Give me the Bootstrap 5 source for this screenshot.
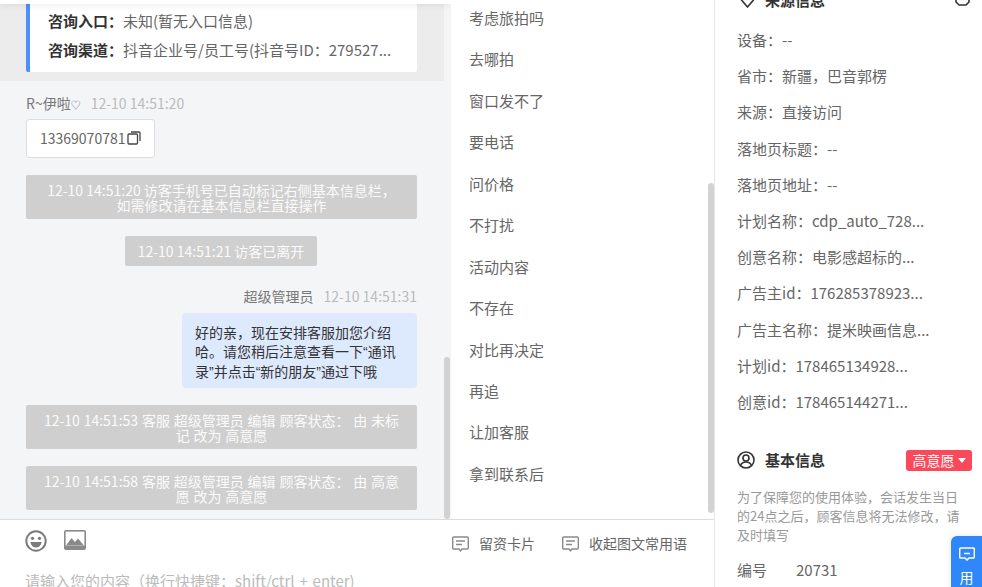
<!doctype html>
<html lang="zh"><head><meta charset="utf-8"><title>会话</title>
<link href="https://cdn.jsdelivr.net/npm/bootstrap@5.3.0/dist/css/bootstrap.min.css" rel="stylesheet">
<style>
html,body{height:587px;overflow:hidden;background:#fff}
body{font-family:"Noto Sans CJK SC","Noto Sans",sans-serif;font-size:15px;color:#666}
.co{font-family:"Noto Sans CJK TC","Noto Sans CJK SC",sans-serif}
.qt{font-family:"Liberation Sans",sans-serif}
.shell{width:982px;height:587px}
.lefty{width:714px;flex:none}
.toprow{height:520px;flex:none;border-bottom:1px solid #dcdcdc}
.chat{width:451px;flex:none;background:#f4f5f7;position:relative}
.chat-strip{height:4px;background:#fff;box-shadow:0 1px 6px rgba(0,0,0,.1);position:relative;z-index:1}
.banner{width:444px;height:77px;background:#ececec;padding:0 27px 0 26px}
.bannercard{height:68px;background:#fff;border-left:4px solid #4d8ffb;padding:2.500px 18px 0;border-radius:0 0 2px 2px}
.bannerline{height:29.500px;line-height:27px;white-space:nowrap}
.bannerline b{color:#333;font-weight:700}
.meta{font-size:14px;line-height:18px;color:#777}
.meta span{color:#bbb;margin-left:10px}
.metal{margin:13px 0 0 26px}
.metar{margin:21px 34px 0 0;text-align:right}
.hrt{font-size:10px}
.phone{width:129px;height:39px;margin:5px 0 0 26px;background:#fff;border:1px solid #ddd;border-radius:3px;padding-left:13px;line-height:37px;font-size:14px}
.phone svg{margin-left:2px;vertical-align:-1px}
.sysmsg{background:#cfcfcf;color:#fbfbfb;font-size:14px;line-height:14.500px;text-align:center;border-radius:2px}
.sysa{margin:17px 34px 0 26px;padding:8px 16px 0;height:44px}
.sysb{margin:17px 0 0 125px;width:192px;height:30px;line-height:30px}
.syschange{margin:17px 34px 0 26px;padding:8px 14px 0;height:44px;word-spacing:.7px}
.mine{width:235px;height:75px;margin:8px 34px 0 auto;background:#dde9fd;border-radius:4px;padding:9.500px 13px 0;line-height:19px;color:#333;font-size:14px;white-space:nowrap}
.chatbar{position:absolute;right:1px;top:357px;width:6px;height:162px;background:#d2d2d2;border-radius:3px}
.mid{width:263px;flex:none;position:relative;background:#fff;padding-left:18px}
.mid div.item{height:41.450px;line-height:35px}
.midbar{position:absolute;right:0;top:183px;width:6px;height:330px;background:#d2d2d2;border-radius:3px}
.composer{height:67px;background:#fff;position:relative}
.tools{padding:10px 0 0 25px;gap:17px}
.linkbtns{position:absolute;right:27px;top:13px;gap:27px;font-size:14px}
.linkbtns>span{gap:10px}
.inputhint{padding:18px 0 0 25px;color:#bbb;white-space:nowrap;word-spacing:1.500px}
.right{width:268px;flex:none;border-left:1px solid #e6e6e6;padding:0 0 0 22px;position:relative}
.srchead{margin-top:-8px;height:16px;color:#333;font-weight:700;line-height:16px}
.srchead .pin{margin:0 10px 0 3px}
.srchead .cap{margin:0 12px 0 auto}
.kv{height:36.200px;line-height:36px;white-space:nowrap}
.kvfirst{margin-top:14px}
.basehead{margin-top:28px;color:#333;font-weight:700;height:24px;line-height:24px;gap:10px}
.hi{background:#f9495a;color:#fff;font-weight:400;border-radius:3px;width:66px;height:21px;line-height:21px;margin-left:auto;margin-right:10px;font-size:14px;gap:3px}
.tri{width:0;height:0;border:4px solid transparent;border-top:5px solid #fff;border-bottom:0}
.tip{margin-top:15px;width:232px;font-size:13px;line-height:19px;color:#999}
.code{margin-top:15px}
.code span{margin-left:29px}
.float{position:absolute;right:0;top:536px;width:31px;height:60px;background:#2f87f9;border-radius:6px 0 0 0;color:#fff;text-align:center;font-size:14px;padding-top:11px;box-shadow:0 0 6px rgba(0,0,0,.1)}
.float svg{margin-bottom:6px}
</style></head><body>
<div class="shell d-flex overflow-hidden">
 <div class="lefty d-flex flex-column">
  <div class="toprow d-flex overflow-hidden">
   <section class="chat overflow-hidden">
    <div class="chat-strip"></div>
    <div class="banner"><div class="bannercard">
      <div class="bannerline"><b>咨询入口<span class="co">：</span></b>未知(暂无入口信息)</div>
      <div class="bannerline"><b>咨询渠道<span class="co">：</span></b>抖音企业号/员工号(抖音号ID<span class="co">：</span>279527...</div>
    </div></div>
    <div class="meta metal">R~伊啦<span class="hrt m-0 text-secondary">♡</span><span>12-10 14:51:20</span></div>
    <div class="phone">13369070781<svg width="14" height="14" viewBox="0 0 14 14" fill="none" stroke="#444" stroke-width="1.3"><rect x="1" y="3" width="9.500" height="10" rx="1"/><path d="M4 1h8a1 1 0 0 1 1 1v8"/></svg></div>
    <div class="sysmsg sysa">12-10 14:51:20 访客手机号已自动标记右侧基本信息栏，<br>如需修改请在基本信息栏直接操作</div>
    <div class="sysmsg sysb">12-10 14:51:21 访客已离开</div>
    <div class="meta metar">超级管理员<span>12-10 14:51:31</span></div>
    <div class="mine">好的亲，现在安排客服加您介绍<br>哈。请您稍后注意查看一下<span class="qt">“</span>通讯<br>录<span class="qt">”</span>并点击<span class="qt">“</span>新的朋友<span class="qt">”</span>通过下哦</div>
    <div class="sysmsg syschange">12-10 14:51:53 客服 超级管理员 编辑 顾客状态<span class="co">：</span> 由 未标<br>记 改为 高意愿</div>
    <div class="sysmsg syschange">12-10 14:51:58 客服 超级管理员 编辑 顾客状态<span class="co">：</span> 由 高意<br>愿 改为 高意愿</div>
    <div class="chatbar"></div>
   </section>
   <section class="mid">
    <div class="item">考虑旅拍吗</div><div class="item">去哪拍</div><div class="item">窗口发不了</div><div class="item">要电话</div><div class="item">问价格</div><div class="item">不打扰</div><div class="item">活动内容</div><div class="item">不存在</div><div class="item">对比再决定</div><div class="item">再追</div><div class="item">让加客服</div><div class="item">拿到联系后</div>
    <div class="midbar"></div>
   </section>
  </div>
  <div class="composer">
   <div class="tools d-flex">
    <svg width="22" height="22" viewBox="0 0 22 22" fill="none"><circle cx="11" cy="11" r="9.700" stroke="#7b7b7b" stroke-width="2"/><circle cx="7.500" cy="8.300" r="1.600" fill="#7b7b7b"/><circle cx="14.500" cy="8.300" r="1.600" fill="#7b7b7b"/><path d="M5.500 12h11a5.500 5.500 0 0 1-11 0z" fill="#7b7b7b"/></svg>
    <svg width="22" height="20" viewBox="0 0 22 20"><rect width="22" height="20" rx="2" fill="#8a8a8a"/><rect x="1.600" y="1.600" width="18.800" height="14" fill="#fff"/><path d="M2 15.600 7.500 8l3.500 4 3-3.500 6 7.100z" fill="#8a8a8a"/></svg>
   </div>
   <div class="linkbtns d-flex">
    <span class="d-flex align-items-center"><svg width="17" height="16" viewBox="0 0 17 16" fill="none" stroke="#8a8a8a" stroke-width="1.400"><path d="M1.700 1h13.600a1 1 0 0 1 1 1v10a1 1 0 0 1-1 1H10l-1.500 1.800L7 13H1.700a1 1 0 0 1-1-1V2a1 1 0 0 1 1-1z"/><path d="M4 5h9M4 8.500h6"/></svg>留资卡片</span>
    <span class="d-flex align-items-center"><svg width="17" height="16" viewBox="0 0 17 16" fill="none" stroke="#8a8a8a" stroke-width="1.400"><path d="M1.700 1h13.600a1 1 0 0 1 1 1v10a1 1 0 0 1-1 1H10l-1.500 1.800L7 13H1.700a1 1 0 0 1-1-1V2a1 1 0 0 1 1-1z"/><path d="M4 5h9M4 8.500h6"/></svg>收起图文常用语</span>
   </div>
   <div class="inputhint">请输入您的内容（换行快捷键<span class="co">：</span>shift/ctrl + enter)</div>
  </div>
 </div>
 <aside class="right">
  <div class="srchead d-flex align-items-center"><svg class="pin" width="15" height="16" viewBox="0 0 15 16" fill="none" stroke="#333" stroke-width="1.600"><path d="M7.500 15 1.500 8a4 4 0 0 1 6-5 4 4 0 0 1 6 5z"/></svg>来源信息<svg class="cap" width="15" height="26" viewBox="0 0 15 26" fill="none" stroke="#333" stroke-width="1.600"><path d="M1 9v6l3 3h7l3-3V9"/></svg></div>
  <div class="kv kvfirst">设备<span class="co">：</span>--</div><div class="kv">省市<span class="co">：</span>新疆，巴音郭楞</div><div class="kv">来源<span class="co">：</span>直接访问</div><div class="kv">落地页标题<span class="co">：</span>--</div><div class="kv">落地页地址<span class="co">：</span>--</div><div class="kv">计划名称<span class="co">：</span>cdp_auto_728...</div><div class="kv">创意名称<span class="co">：</span>电影感超标的...</div><div class="kv">广告主id<span class="co">：</span>176285378923...</div><div class="kv">广告主名称<span class="co">：</span>提米映画信息...</div><div class="kv">计划id<span class="co">：</span>178465134928...</div><div class="kv">创意id<span class="co">：</span>178465144271...</div>
  <div class="basehead d-flex align-items-center"><svg width="18" height="18" viewBox="0 0 18 18" fill="none" stroke="#333" stroke-width="1.600"><circle cx="9" cy="9" r="8"/><circle cx="9" cy="7" r="3"/><path d="M3.500 14.500c1-2.500 3-3.500 5.500-3.500s4.500 1 5.500 3.500"/></svg>基本信息<span class="hi d-flex align-items-center justify-content-center">高意愿<i class="tri"></i></span></div>
  <div class="tip">为了保障您的使用体验，会话发生当日的24点之后，顾客信息将无法修改，请及时填写</div>
  <div class="code">编号<span>20731</span></div>
  <div class="float"><svg width="16" height="14" viewBox="0 0 16 14" fill="none" stroke="#fff" stroke-width="1.500" class="d-block mx-auto"><path d="M1.700 1h12.600a1 1 0 0 1 1 1v8a1 1 0 0 1-1 1H10l-2 2-2-2H1.700a1 1 0 0 1-1-1V2a1 1 0 0 1 1-1z"/><path d="M5 6.500h6"/></svg>用</div>
 </aside>
</div>
</body></html>
